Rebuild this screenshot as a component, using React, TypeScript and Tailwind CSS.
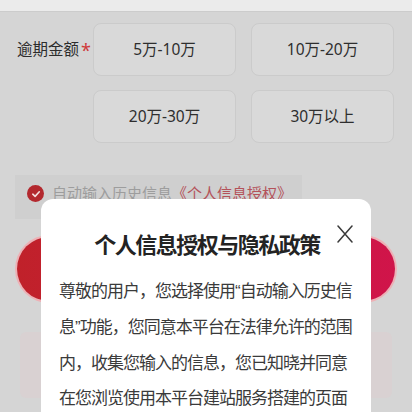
import React from 'react';

const amounts = ['5万-10万', '10万-20万', '20万-30万', '30万以上'];

const font = { fontFamily: '"Noto Sans", "Noto Sans CJK SC", sans-serif' };
const quoteFont = { fontFamily: '"Liberation Sans", sans-serif' };

function CheckDot() {
  return (
    <span className="flex h-[17px] w-[17px] shrink-0 items-center justify-center rounded-full bg-[#b3282e]">
      <svg width="10" height="10" viewBox="0 0 10 10" fill="none">
        <path d="M1.8 5.2 L4.1 7.4 L8.3 2.8" stroke="#f3dede" strokeWidth="1.6" strokeLinecap="round" strokeLinejoin="round" />
      </svg>
    </span>
  );
}

function PrivacyModal() {
  return (
    <div className="absolute left-[41px] top-[199px] bottom-0 w-[330px] rounded-t-[12px] bg-white pt-[30px]">
      <button className="absolute right-[18px] top-[26px]" aria-label="关闭">
        <svg width="16" height="18" viewBox="0 0 16 18" fill="none">
          <path d="M1 1 L15 17 M15 1 L1 17" stroke="#3a3a3a" strokeWidth="1.5" strokeLinecap="round" />
        </svg>
      </button>
      <h2 className="pl-[2px] text-center text-[22px] font-bold leading-[30px] tracking-[-1.5px] text-[#232323]">
        个人信息授权与隐私政策
      </h2>
      <p className="mt-[14px] ml-[18px] w-[298px] text-[17px] leading-[35px] tracking-[-1px] text-[#3a3a3a]">
        尊敬的用户，您选择使用<span style={quoteFont}>“</span>自动输入历史信息<span style={quoteFont}>”</span>功能，您同意本平台在法律允许的范围内，收集您输入的信息，您已知晓并同意在您浏览使用本平台建站服务搭建的页面时，本平台将依法收集、使用您的个人信息。
      </p>
    </div>
  );
}

export default function App() {
  return (
    <div className="relative h-[412px] w-[412px] overflow-hidden bg-[#d5d5d5]" style={font}>
      <div className="h-[12px] border-b border-[#cccccc] bg-[#ebebeb]" />

      {/* amount selector */}
      <div className="mt-[11px] flex">
        <div className="flex h-[54px] w-[93px] items-center pl-[17px] text-[15.5px] text-[#2c2c2c]">
          逾期金额<span className="ml-[2px] text-[18px] text-[#cf3a3a]">*</span>
        </div>
        <div className="grid grid-cols-[143px_143px] gap-x-[15px] gap-y-[14px]">
          {amounts.map((a, i) => (
            <div
              key={i}
              className="flex h-[53px] items-center justify-center rounded-[8px] border border-[#cbcbcb] bg-[#d9d9d9] text-[15.5px] text-[#2e2e2e]"
            >
              {a}
            </div>
          ))}
        </div>
      </div>

      {/* auto fill agreement */}
      <div className="ml-[15px] mt-[32px] flex h-[44px] w-[287px] items-start gap-[8px] bg-[#cfcfcf] pl-[12px] pt-[10px]">
        <CheckDot />
        <span className="text-[15px] leading-[17px] text-[#9d9d9d]">
          自动输入历史信息<span className="text-[#b4525a]">《个人信息授权》</span>
        </span>
      </div>

      {/* submit button behind the dialog */}
      <div className="mx-[17px] mt-[18px] h-[64px] rounded-full bg-gradient-to-r from-[#c0212a] to-[#d0144a] ring-2 ring-[#eeb0b5]" />

      <div className="mx-[20px] mt-[31px] h-[66px] rounded-[6px] bg-[#d9d1d2]" />

      <PrivacyModal />
    </div>
  );
}
